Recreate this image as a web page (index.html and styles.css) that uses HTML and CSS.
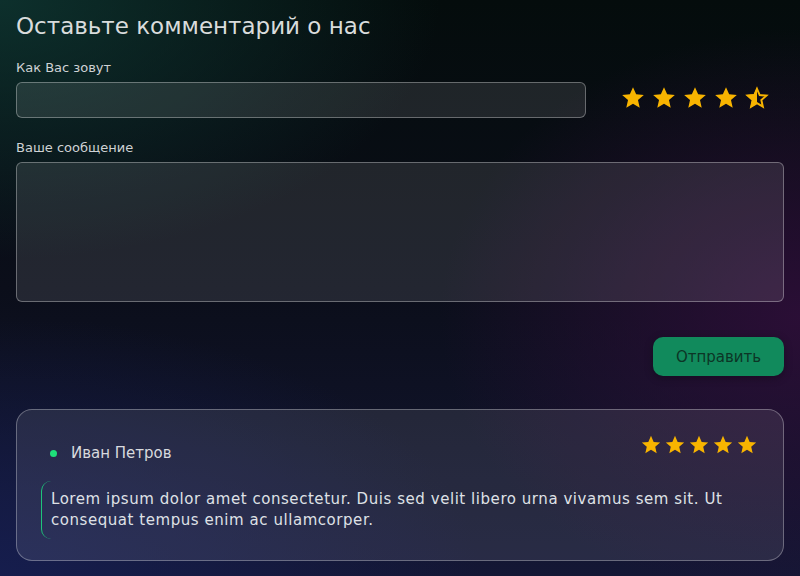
FILE: index.html
```html
<!DOCTYPE html>
<html lang="ru">
<head>
    <meta charset="UTF-8">
    <meta name="viewport" content="width=device-width, initial-scale=1.0">
    <title>Отзывы</title>
    <link rel="stylesheet" href="styles.css">
</head>
<body>
    <div class="page">
        <h1 class="title">Оставьте комментарий о нас</h1>

        <!-- форма -->
        <form class="form">
            <div class="row">
                <label class="field name-field">
                    <span class="label">Как Вас зовут</span>
                    <input type="text" class="input">
                </label>
                <div class="rating">
                    <svg class="star" viewBox="0 0 24 24"><path d="M12 2l2.9 6.6 7.1.6-5.4 4.7 1.6 7-6.2-3.7-6.2 3.7 1.6-7L2 9.2l7.1-.6z"/></svg>
                    <svg class="star" viewBox="0 0 24 24"><path d="M12 2l2.9 6.6 7.1.6-5.4 4.7 1.6 7-6.2-3.7-6.2 3.7 1.6-7L2 9.2l7.1-.6z"/></svg>
                    <svg class="star" viewBox="0 0 24 24"><path d="M12 2l2.9 6.6 7.1.6-5.4 4.7 1.6 7-6.2-3.7-6.2 3.7 1.6-7L2 9.2l7.1-.6z"/></svg>
                    <svg class="star" viewBox="0 0 24 24"><path d="M12 2l2.9 6.6 7.1.6-5.4 4.7 1.6 7-6.2-3.7-6.2 3.7 1.6-7L2 9.2l7.1-.6z"/></svg>
                    <svg class="star half" viewBox="0 0 24 24"><path class="outline" d="M12 3.5l2.5 5.8 6.2.5-4.7 4.1 1.4 6.1-5.4-3.2-5.4 3.2 1.4-6.1-4.7-4.1 6.2-.5z"/><path d="M12 2v15.2l-6.2 3.7 1.6-7L2 9.2l7.1-.6z"/></svg>
                </div>
            </div>

            <label class="field">
                <span class="label">Ваше сообщение</span>
                <textarea class="input textarea"></textarea>
            </label>

            <div class="actions">
                <button type="button" class="btn">Отправить</button>
            </div>
        </form>

        <!-- отзыв -->
        <div class="review">
            <div class="review-head">
                <div class="author">
                    <span class="dot"></span>
                    Иван Петров
                </div>
                <div class="rating small">
                    <svg class="star" viewBox="0 0 24 24"><path d="M12 2l2.9 6.6 7.1.6-5.4 4.7 1.6 7-6.2-3.7-6.2 3.7 1.6-7L2 9.2l7.1-.6z"/></svg>
                    <svg class="star" viewBox="0 0 24 24"><path d="M12 2l2.9 6.6 7.1.6-5.4 4.7 1.6 7-6.2-3.7-6.2 3.7 1.6-7L2 9.2l7.1-.6z"/></svg>
                    <svg class="star" viewBox="0 0 24 24"><path d="M12 2l2.9 6.6 7.1.6-5.4 4.7 1.6 7-6.2-3.7-6.2 3.7 1.6-7L2 9.2l7.1-.6z"/></svg>
                    <svg class="star" viewBox="0 0 24 24"><path d="M12 2l2.9 6.6 7.1.6-5.4 4.7 1.6 7-6.2-3.7-6.2 3.7 1.6-7L2 9.2l7.1-.6z"/></svg>
                    <svg class="star" viewBox="0 0 24 24"><path d="M12 2l2.9 6.6 7.1.6-5.4 4.7 1.6 7-6.2-3.7-6.2 3.7 1.6-7L2 9.2l7.1-.6z"/></svg>
                </div>
            </div>
            <p class="quote">Lorem ipsum dolor amet consectetur. Duis sed velit libero urna vivamus sem sit. Ut consequat tempus enim ac ullamcorper.</p>
        </div>
    </div>
</body>
</html>
```

FILE: styles.css
```css
* {
    margin: 0;
    padding: 0;
    box-sizing: border-box;
}

html, body {
    height: 100%;
    overflow: hidden;
}

body {
    font-family: "DejaVu Sans", Verdana, sans-serif;
    color: #d6d8dc;
    background-color: #0a0d14;
    background-image:
        radial-gradient(ellipse 55% 45% at 0% 0%, rgba(16, 60, 55, 0.75), transparent 100%),
        radial-gradient(ellipse 45% 50% at 100% 55%, rgba(50, 14, 60, 0.8), transparent 100%),
        radial-gradient(ellipse 60% 45% at 0% 100%, rgba(22, 30, 80, 0.9), transparent 100%),
        linear-gradient(180deg, #040c0c 0%, #0b0e1a 50%, #141735 100%);
}

.page {
    padding: 12px 16px 18px;
}

.title {
    font-size: 23px;
    font-weight: 400;
    color: #d9dcdc;
    line-height: 28px;
    margin-bottom: 20px;
}

.form {
    display: flex;
    flex-direction: column;
}

.row {
    display: flex;
    align-items: flex-end;
}

.field {
    display: flex;
    flex-direction: column;
}

.name-field {
    width: 570px;
}

.label {
    font-size: 13px;
    line-height: 16px;
    color: #cfd2d4;
    margin-bottom: 6px;
}

.input {
    width: 100%;
    height: 36px;
    border: 1px solid rgba(255, 255, 255, 0.32);
    border-radius: 6px;
    background: rgba(255, 255, 255, 0.1);
    color: #fff;
    font: inherit;
    outline: none;
}

.textarea {
    height: 140px;
    resize: none;
}

.form > .field {
    margin-top: 22px;
}

.rating {
    display: flex;
    gap: 5px;
    margin-left: 34px;
    padding-bottom: 7px;
}

.star {
    width: 26px;
    height: 26px;
    fill: #f8b400;
}

.star.half .outline {
    fill: none;
    stroke: #f8b400;
    stroke-width: 1.8;
    stroke-linejoin: miter;
}

.actions {
    display: flex;
    justify-content: flex-end;
    margin-top: 35px;
}

.btn {
    width: 131px;
    height: 39px;
    border: none;
    border-radius: 10px;
    background: #118a5c;
    color: #0c3526;
    font-family: inherit;
    font-size: 15px;
    box-shadow: 0 2px 8px rgba(0, 0, 0, 0.3);
}

.review {
    margin-top: 33px;
    border: 1px solid rgba(255, 255, 255, 0.3);
    border-radius: 16px;
    background: rgba(255, 255, 255, 0.09);
    padding: 24px 25px 21px 24px;
}

.review-head {
    display: flex;
    justify-content: space-between;
    align-items: flex-start;
}

.author {
    display: flex;
    align-items: center;
    gap: 14px;
    font-size: 15px;
    color: #d8dade;
    padding-left: 9px;
    margin-top: 10px;
}

.dot {
    width: 7px;
    height: 7px;
    border-radius: 50%;
    background: #1ee07a;
}

.rating.small {
    gap: 2px;
    margin: 0;
    padding: 0;
}

.rating.small .star {
    width: 22px;
    height: 22px;
}

.quote {
    margin-top: 19px;
    border-left: 1px solid #1ec47a;
    border-radius: 10px 0 0 10px;
    padding: 8px 0 8px 9px;
    font-size: 15px;
    line-height: 21px;
    letter-spacing: 0.55px;
    color: #dfe1e6;
}
```
